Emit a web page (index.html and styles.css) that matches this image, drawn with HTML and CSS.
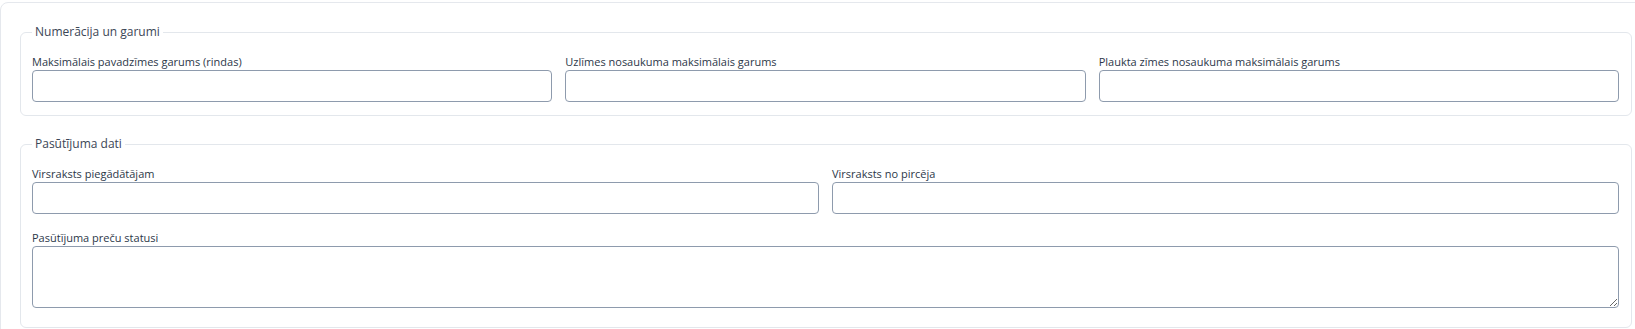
FILE: index.html
```html
<!DOCTYPE html>
<html lang="lv">
<head>
<meta charset="utf-8">
<title>Iestatījumi</title>
<link rel="stylesheet" href="styles.css">
</head>
<body>
<div class="card">
  <fieldset class="group group-first">
    <legend class="group-title">Numerācija un garumi</legend>
    <div class="row cols-3">
      <div class="field">
        <label class="field-label" for="f1">Maksimālais pavadzīmes garums (rindas)</label>
        <input class="field-input" id="f1" type="text">
      </div>
      <div class="field">
        <label class="field-label" for="f2">Uzlīmes nosaukuma maksimālais garums</label>
        <input class="field-input" id="f2" type="text">
      </div>
      <div class="field">
        <label class="field-label" for="f3">Plaukta zīmes nosaukuma maksimālais garums</label>
        <input class="field-input" id="f3" type="text">
      </div>
    </div>
  </fieldset>

  <fieldset class="group group-second">
    <legend class="group-title">Pasūtījuma dati</legend>
    <div class="row cols-2">
      <div class="field">
        <label class="field-label" for="f4">Virsraksts piegādātājam</label>
        <input class="field-input" id="f4" type="text">
      </div>
      <div class="field">
        <label class="field-label" for="f5">Virsraksts no pircēja</label>
        <input class="field-input" id="f5" type="text">
      </div>
    </div>
    <div class="row cols-1 row-next">
      <div class="field">
        <label class="field-label" for="f6">Pasūtījuma preču statusi</label>
        <textarea class="field-textarea" id="f6"></textarea>
      </div>
    </div>
  </fieldset>
</div>
</body>
</html>
```

FILE: styles.css
```css
html, body {
  margin: 0;
  padding: 0;
  background: #ffffff;
  overflow: hidden;
}

body {
  font-family: "Open Sans", "Noto Sans", "Liberation Sans", sans-serif;
  color: #2f3a4a;
}

.card {
  box-sizing: border-box;
  margin-top: 2px;
  width: calc(100% + 18px);
  border: 1px solid #e5e8ed;
  border-radius: 8px;
  padding: 21px 19px 20px 19px;
  background: #ffffff;
}

.group {
  box-sizing: border-box;
  width: 1612px;
  margin: 0;
  border: 1px solid #e3e7ec;
  border-radius: 6px;
  padding: 14px 12px 13px 11px;
  min-width: 0;
}

.group-second {
  margin-top: 20px;
  padding-bottom: 19px;
}

.group-title {
  font-size: 12px;
  line-height: 16px;
  padding: 0 3px;
  margin-left: 0;
  color: #3c4656;
}

.row {
  display: grid;
  column-gap: 13px;
}

.cols-3 { grid-template-columns: 1fr 1fr 1fr; }
.cols-2 { grid-template-columns: 1fr 1fr; }
.cols-1 { grid-template-columns: 1fr; }

.row-next {
  margin-top: 16px;
}

.field {
  display: flex;
  flex-direction: column;
  min-width: 0;
}

.field-label {
  font-size: 11px;
  line-height: 16px;
  color: #2c3748;
}

.field-input,
.field-textarea {
  display: block;
  box-sizing: border-box;
  width: 100%;
  margin: 0;
  border: 1px solid #8e9bad;
  border-radius: 4px;
  background: #ffffff;
  font-family: inherit;
  font-size: 12px;
  padding: 4px 8px;
  outline: none;
}

.field-input {
  height: 32px;
}

.field-textarea {
  height: 62px;
  resize: vertical;
}
```
